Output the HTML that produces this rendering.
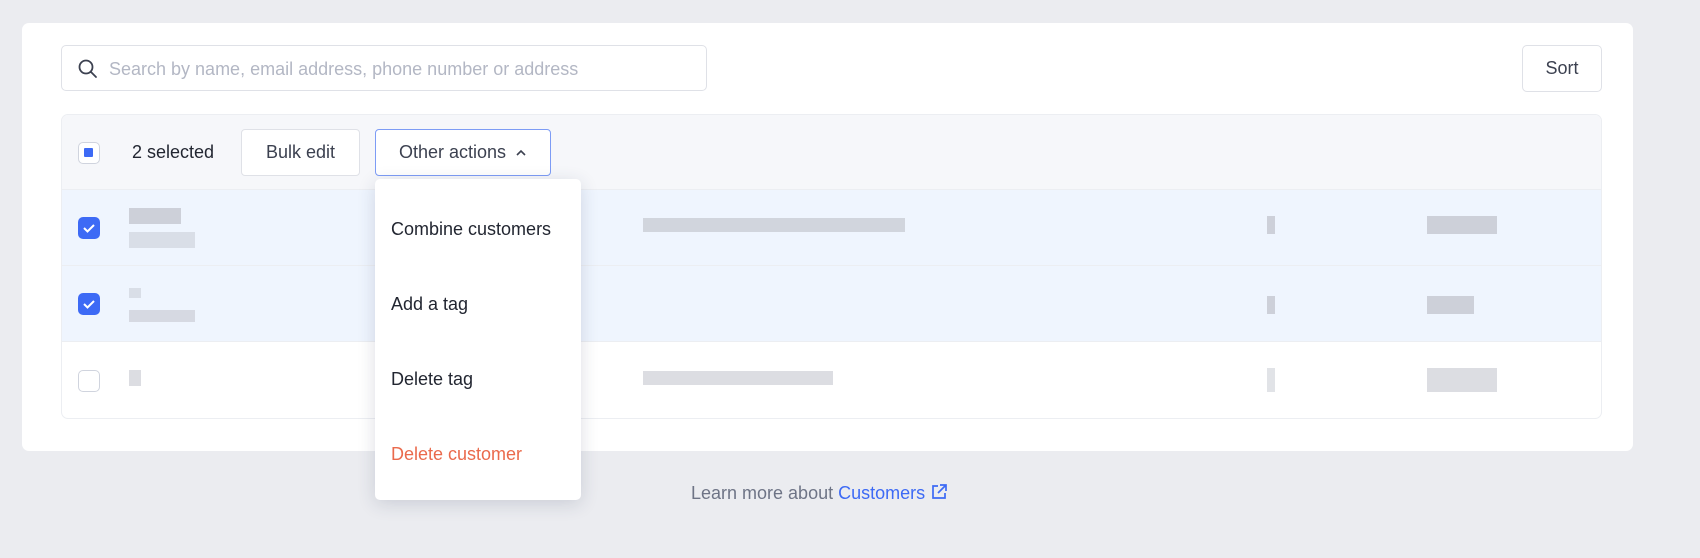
<!DOCTYPE html>
<html><head><style>
*{box-sizing:border-box;margin:0;padding:0}
body{width:1700px;height:558px;background:#ebecf0;font-family:"Liberation Sans",sans-serif;position:relative;overflow:hidden;color:#222631}
.abs{position:absolute}
.card{left:22px;top:23px;width:1611px;height:428px;background:#fff;border-radius:7px}
.search{left:61px;top:45px;width:646px;height:46px;border:1px solid #dfe1e7;border-radius:5px}
.search span{position:absolute;left:47px;top:13px;font-size:18px;color:#b3b7c4}
.sort{left:1522px;top:45px;width:80px;height:47px;border:1px solid #dfe1e7;border-radius:5px;font-size:18px;text-align:center;line-height:45px;color:#3c4150}
.table{left:61px;top:114px;width:1541px;height:305px;border:1px solid #eceef2;border-radius:7px;overflow:hidden}
.hdr{left:0;top:0;width:100%;height:75px;background:#f6f7fa;border-bottom:1px solid #eceef2}
.row{left:0;width:100%;height:76px;border-bottom:1px solid #eceef2}
.cb{width:22px;height:22px;border-radius:5px}
.btn{height:47px;border:1px solid #dfe1e7;border-radius:4px;background:#fff;font-size:18px;line-height:45px;text-align:center;color:#3c4150}
.blur{background:#c4c7cf;opacity:.8}
.menu{left:375px;top:179px;width:206px;height:321px;background:#fff;border-radius:5px;box-shadow:0 4px 18px rgba(40,50,80,.16)}
.menu div{position:absolute;left:16px;font-size:18px;color:#222631}
</style></head><body>
<div class="abs card"></div>
<div class="abs search">
<svg class="abs" style="left:15px;top:12px" width="22" height="22" viewBox="0 0 22 22"><circle cx="9" cy="9" r="6.5" fill="none" stroke="#3c4150" stroke-width="1.8"/><path d="M14 14l5 5" stroke="#3c4150" stroke-width="1.8" stroke-linecap="round"/></svg>
<span>Search by name, email address, phone number or address</span></div>
<div class="abs sort">Sort</div>
<div class="abs table">
 <div class="abs hdr"></div>
 <div class="abs row" style="top:75px;background:#eff5fe"></div>
 <div class="abs row" style="top:151px;background:#eff5fe"></div>
 <div class="abs row" style="top:228px;border:none"></div>
 <div class="abs cb" style="left:16px;top:27px;border:1.5px solid #d0d4de;background:#fff"><div class="abs" style="left:5px;top:5px;width:9px;height:9px;background:#3d6af5;border-radius:1px"></div></div>
 <div class="abs" style="left:70px;top:27px;font-size:18px;color:#222631">2 selected</div>
 <div class="abs btn" style="left:179px;top:14px;width:119px">Bulk edit</div>
 <div class="abs btn" style="left:313px;top:14px;width:176px;border-color:#7d9cf5">Other actions <svg width="12" height="10" viewBox="0 0 12 10" style="margin-left:4px"><path d="M2 7l4-4 4 4" fill="none" stroke="#3c4150" stroke-width="1.6"/></svg></div>
 <div class="abs cb" style="left:16px;top:102px;background:#3d6af5"><svg width="22" height="22" viewBox="0 0 22 22"><path d="M6 11l3.5 3.5L16 8" fill="none" stroke="#fff" stroke-width="2"/></svg></div>
 <div class="abs cb" style="left:16px;top:178px;background:#3d6af5"><svg width="22" height="22" viewBox="0 0 22 22"><path d="M6 11l3.5 3.5L16 8" fill="none" stroke="#fff" stroke-width="2"/></svg></div>
 <div class="abs cb" style="left:16px;top:255px;border:1.5px solid #d0d4de;background:#fff"></div>
 <div class="abs blur" style="left:67px;top:93px;width:52px;height:16px"></div>
 <div class="abs blur" style="left:67px;top:117px;width:66px;height:16px;opacity:.5"></div>
 <div class="abs blur" style="left:67px;top:173px;width:12px;height:10px;opacity:.5"></div>
 <div class="abs blur" style="left:67px;top:195px;width:66px;height:12px;opacity:.6"></div>
 <div class="abs blur" style="left:67px;top:255px;width:12px;height:16px;opacity:.6"></div>
 <div class="abs blur" style="left:581px;top:103px;width:262px;height:14px;opacity:.7"></div>
 <div class="abs blur" style="left:581px;top:256px;width:190px;height:14px;opacity:.6"></div>
 <div class="abs blur" style="left:1205px;top:101px;width:8px;height:18px"></div>
 <div class="abs blur" style="left:1205px;top:181px;width:8px;height:18px"></div>
 <div class="abs blur" style="left:1205px;top:253px;width:8px;height:24px;opacity:.5"></div>
 <div class="abs blur" style="left:1365px;top:101px;width:70px;height:18px"></div>
 <div class="abs blur" style="left:1365px;top:181px;width:47px;height:18px"></div>
 <div class="abs blur" style="left:1365px;top:253px;width:70px;height:24px;opacity:.6"></div>
</div>
<div class="abs menu">
 <div style="top:40px">Combine customers</div>
 <div style="top:115px">Add a tag</div>
 <div style="top:190px">Delete tag</div>
 <div style="top:265px;color:#ea6a4c">Delete customer</div>
</div>
<div class="abs" style="left:691px;top:483px;font-size:18px;color:#6e7486">Learn more about <span style="color:#3d6af5">Customers</span> <svg width="18" height="18" viewBox="0 0 18 18" style="vertical-align:-2px"><path d="M8 3H3v12h12v-5M10 2h6v6M16 2l-8 8" fill="none" stroke="#3d6af5" stroke-width="1.7"/></svg></div>
</body></html>
